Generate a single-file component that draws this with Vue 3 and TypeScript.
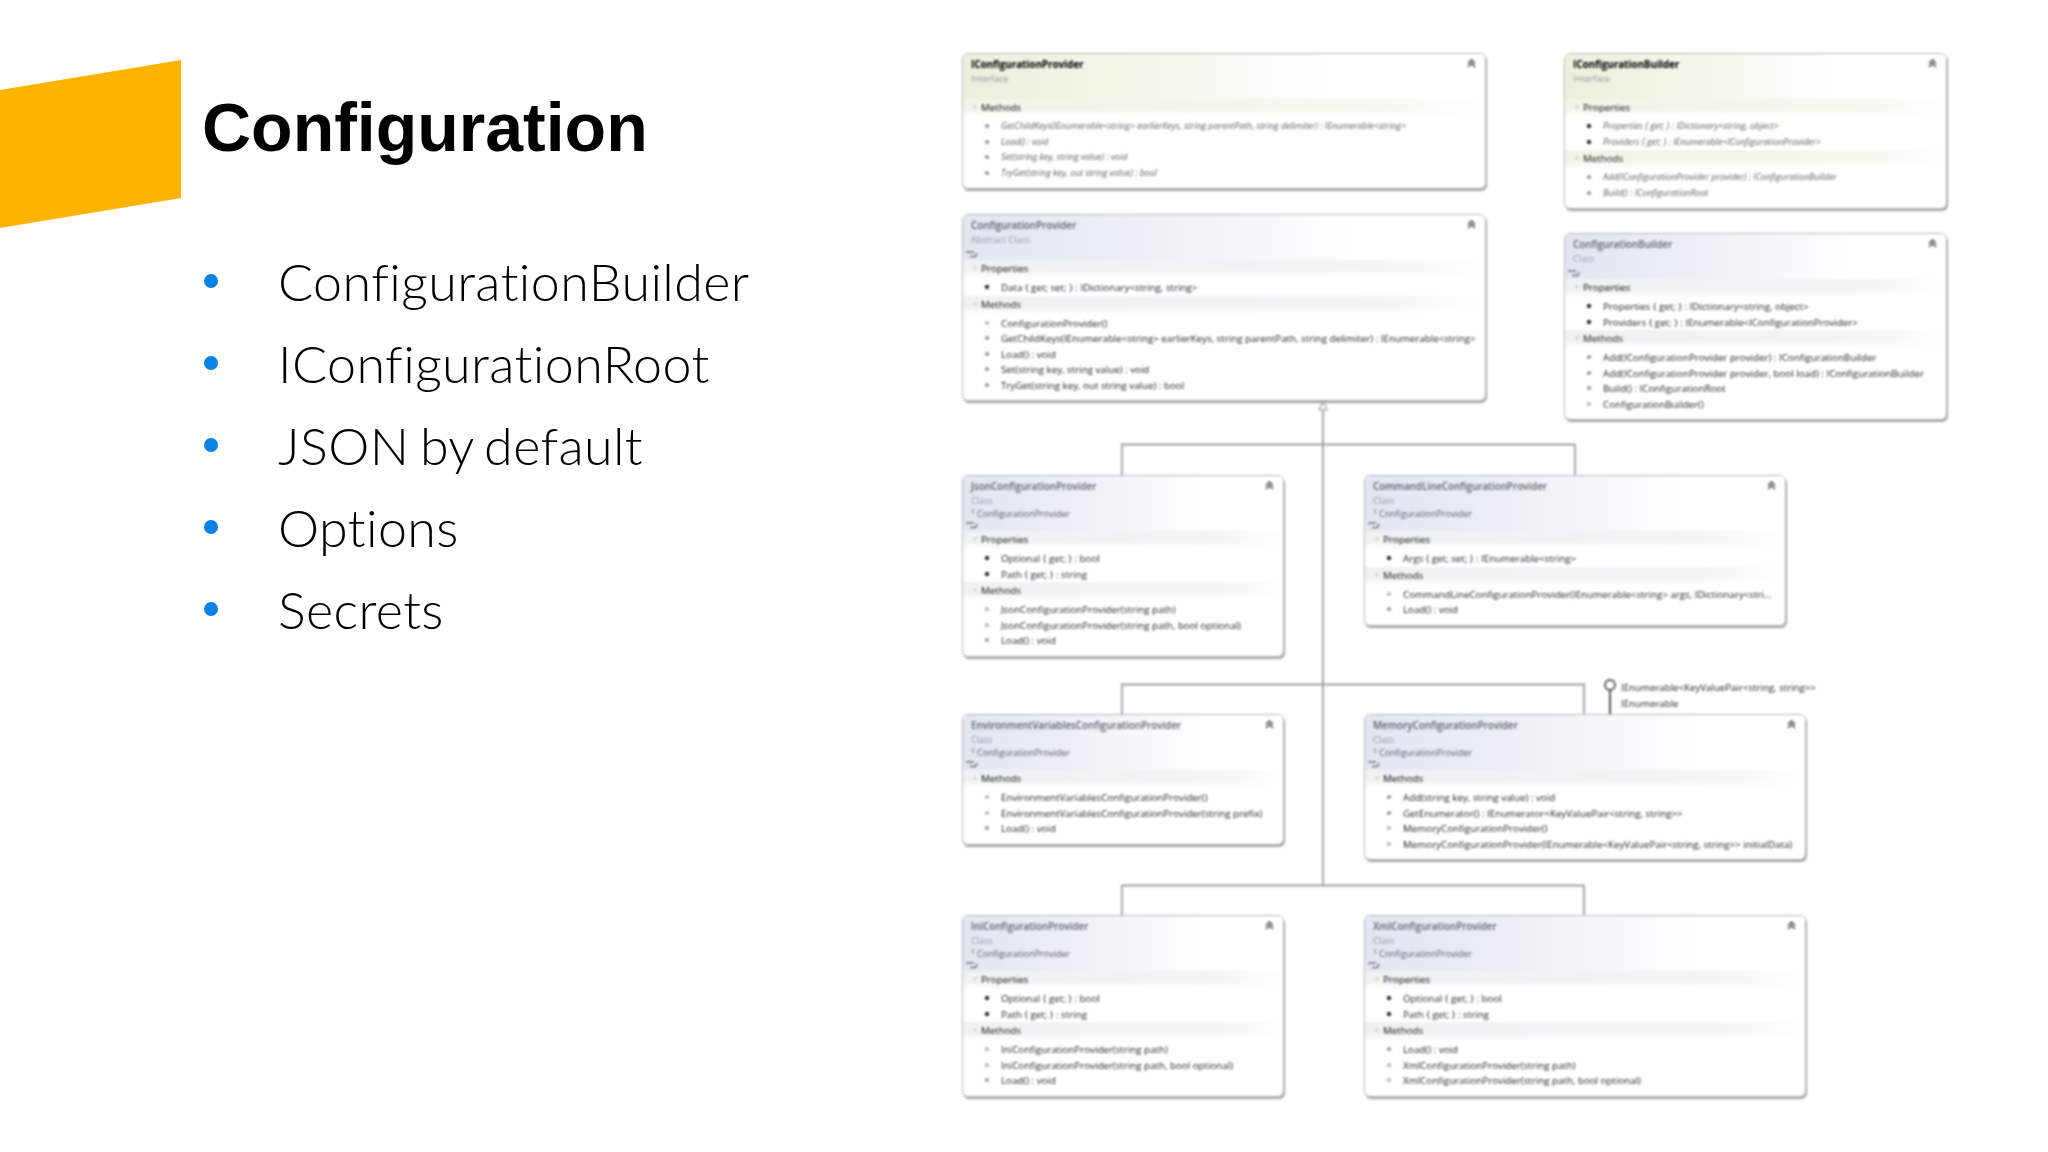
<script setup lang="ts">
type Member = { t: string; k: 'p' | 'm' | 'c' }
type Section = { name: string; items: Member[] }
type Card = {
  name: string
  kind: string
  base?: string
  iface?: boolean
  icon?: boolean
  x: number
  y: number
  w: number
  sections: Section[]
}

const bullets = ['ConfigurationBuilder', 'IConfigurationRoot', 'JSON by default', 'Options', 'Secrets']

const P = (t: string): Member => ({ t, k: 'p' })
const M = (t: string): Member => ({ t, k: 'm' })
const C = (t: string): Member => ({ t, k: 'c' })

const cards: Card[] = [
  {
    name: 'IConfigurationProvider', kind: 'Interface', iface: true, x: 2, y: 53, w: 524,
    sections: [{ name: 'Methods', items: [
      M('GetChildKeys(IEnumerable<string> earlierKeys, string parentPath, string delimiter) : IEnumerable<string>'),
      M('Load() : void'),
      M('Set(string key, string value) : void'),
      M('TryGet(string key, out string value) : bool')
    ] }]
  },
  {
    name: 'ConfigurationProvider', kind: 'Abstract Class', icon: true, x: 2, y: 214, w: 524,
    sections: [
      { name: 'Properties', items: [P('Data { get; set; } : IDictionary<string, string>')] },
      { name: 'Methods', items: [
        C('ConfigurationProvider()'),
        M('GetChildKeys(IEnumerable<string> earlierKeys, string parentPath, string delimiter) : IEnumerable<string>'),
        M('Load() : void'),
        M('Set(string key, string value) : void'),
        M('TryGet(string key, out string value) : bool')
      ] }
    ]
  },
  {
    name: 'IConfigurationBuilder', kind: 'Interface', iface: true, x: 604, y: 53, w: 383,
    sections: [
      { name: 'Properties', items: [
        P('Properties { get; } : IDictionary<string, object>'),
        P('Providers { get; } : IEnumerable<IConfigurationProvider>')
      ] },
      { name: 'Methods', items: [
        M('Add(IConfigurationProvider provider) : IConfigurationBuilder'),
        M('Build() : IConfigurationRoot')
      ] }
    ]
  },
  {
    name: 'ConfigurationBuilder', kind: 'Class', icon: true, x: 604, y: 233, w: 383,
    sections: [
      { name: 'Properties', items: [
        P('Properties { get; } : IDictionary<string, object>'),
        P('Providers { get; } : IEnumerable<IConfigurationProvider>')
      ] },
      { name: 'Methods', items: [
        M('Add(IConfigurationProvider provider) : IConfigurationBuilder'),
        M('Add(IConfigurationProvider provider, bool load) : IConfigurationBuilder'),
        M('Build() : IConfigurationRoot'),
        C('ConfigurationBuilder()')
      ] }
    ]
  },
  {
    name: 'JsonConfigurationProvider', kind: 'Class', base: 'ConfigurationProvider', icon: true, x: 2, y: 475, w: 322,
    sections: [
      { name: 'Properties', items: [P('Optional { get; } : bool'), P('Path { get; } : string')] },
      { name: 'Methods', items: [
        C('JsonConfigurationProvider(string path)'),
        C('JsonConfigurationProvider(string path, bool optional)'),
        M('Load() : void')
      ] }
    ]
  },
  {
    name: 'CommandLineConfigurationProvider', kind: 'Class', base: 'ConfigurationProvider', icon: true, x: 404, y: 475, w: 422,
    sections: [
      { name: 'Properties', items: [P('Args { get; set; } : IEnumerable<string>')] },
      { name: 'Methods', items: [
        C('CommandLineConfigurationProvider(IEnumerable<string> args, IDictionary<stri...'),
        M('Load() : void')
      ] }
    ]
  },
  {
    name: 'EnvironmentVariablesConfigurationProvider', kind: 'Class', base: 'ConfigurationProvider', icon: true, x: 2, y: 714, w: 322,
    sections: [{ name: 'Methods', items: [
      C('EnvironmentVariablesConfigurationProvider()'),
      C('EnvironmentVariablesConfigurationProvider(string prefix)'),
      M('Load() : void')
    ] }]
  },
  {
    name: 'MemoryConfigurationProvider', kind: 'Class', base: 'ConfigurationProvider', icon: true, x: 404, y: 714, w: 442,
    sections: [{ name: 'Methods', items: [
      M('Add(string key, string value) : void'),
      M('GetEnumerator() : IEnumerator<KeyValuePair<string, string>>'),
      C('MemoryConfigurationProvider()'),
      C('MemoryConfigurationProvider(IEnumerable<KeyValuePair<string, string>> initialData)')
    ] }]
  },
  {
    name: 'IniConfigurationProvider', kind: 'Class', base: 'ConfigurationProvider', icon: true, x: 2, y: 915, w: 322,
    sections: [
      { name: 'Properties', items: [P('Optional { get; } : bool'), P('Path { get; } : string')] },
      { name: 'Methods', items: [
        C('IniConfigurationProvider(string path)'),
        C('IniConfigurationProvider(string path, bool optional)'),
        M('Load() : void')
      ] }
    ]
  },
  {
    name: 'XmlConfigurationProvider', kind: 'Class', base: 'ConfigurationProvider', icon: true, x: 404, y: 915, w: 442,
    sections: [
      { name: 'Properties', items: [P('Optional { get; } : bool'), P('Path { get; } : string')] },
      { name: 'Methods', items: [
        M('Load() : void'),
        C('XmlConfigurationProvider(string path)'),
        C('XmlConfigurationProvider(string path, bool optional)')
      ] }
    ]
  }
]

const links: string[] = [
  'M363 402V885',
  'M162 475V444.5H615V475',
  'M162 714V684.5H624V714',
  'M162 915V885.5H624V915'
]
</script>

<template>
  <main class="slide">
    <section class="intro">
      <header class="head">
        <svg class="flag" width="181" height="168" viewBox="0 0 181 168" aria-hidden="true">
          <polygon points="0,30 181,0 181,138 0,168" fill="#ffb400" />
        </svg>
        <h1 class="title">Configuration</h1>
      </header>
      <ul class="points">
        <li v-for="b in bullets" :key="b" class="point">
          <span class="dot"></span>
          <span class="point-text">{{ b }}</span>
        </li>
      </ul>
    </section>

    <section class="diagram">
      <svg class="wires" width="1000" height="1152" viewBox="0 0 1000 1152" aria-hidden="true">
        <path v-for="l in links" :key="l" :d="l" fill="none" stroke="#a0a0a0" stroke-width="1.8" />
        <path d="M650 691V714" fill="none" stroke="#555" stroke-width="2" />
        <polygon points="363,401 359,410 367,410" fill="#fff" stroke="#999" stroke-width="1.2" />
        <circle cx="650" cy="685" r="5" fill="#fff" stroke="#555" stroke-width="1.8" />
      </svg>

      <div class="iface-label">
        <div>IEnumerable&lt;KeyValuePair&lt;string, string&gt;&gt;</div>
        <div>IEnumerable</div>
      </div>

      <article
        v-for="c in cards"
        :key="c.name"
        class="card"
        :style="{ left: c.x + 'px', top: c.y + 'px', width: c.w + 'px' }"
      >
        <div class="card-head" :class="{ green: c.iface, tall: c.base }">
          <div class="card-name" :class="{ strong: c.iface }">{{ c.name }}</div>
          <div class="card-kind">{{ c.kind }}</div>
          <div v-if="c.base" class="card-base"><i class="tick"></i>{{ c.base }}</div>
          <svg v-if="c.icon" class="lolly" width="14" height="8" viewBox="0 0 14 8" aria-hidden="true">
            <path d="M0 2H8M4 6.500H9.500L11 3" fill="none" stroke="#6f7580" stroke-width="1.500" />
          </svg>
          <svg class="fold" width="9" height="9" viewBox="0 0 9 9" aria-hidden="true">
            <path d="M1 4.500L4.500 1L8 4.500M1 8L4.500 4.500L8 8" fill="none" stroke="#555" stroke-width="1.600" />
          </svg>
        </div>
        <div v-for="s in c.sections" :key="s.name" class="group">
          <div class="group-head" :class="{ green: c.iface }">
            <i class="caret"></i>{{ s.name }}
          </div>
          <ul class="members">
            <li v-for="m in s.items" :key="m.t" class="member" :class="{ ghost: c.iface }">
              <i class="glyph" :class="m.k"></i>{{ m.t }}
            </li>
          </ul>
        </div>
      </article>
    </section>
  </main>
</template>

<style>
html, body { margin: 0; background: #fff; }
</style>

<style scoped>
.slide {
  display: flex;
  width: 2048px;
  height: 1152px;
  overflow: hidden;
  background: #fff;
}
.intro { width: 960px; flex: none; padding-top: 60px; box-sizing: border-box; }
.head { display: flex; align-items: flex-start; height: 168px; }
.flag { flex: none; }
.title {
  margin: 21px 0 0 21px;
  font: 700 68px/92px "Liberation Sans", Arial, sans-serif;
  color: #000;
}
.points { list-style: none; margin: 12px 0 0; padding: 0 0 0 204px; }
.point { display: flex; align-items: center; height: 82px; }
.dot { width: 14px; height: 14px; border-radius: 50%; background: #0a84e4; flex: none; }
.point-text {
  margin-left: 60px;
  font: 300 52px/82px Lato, "Open Sans", sans-serif;
  color: #000;
  letter-spacing: 0.4px;
  word-spacing: -4px;
  white-space: nowrap;
}

.diagram {
  position: relative;
  width: 1000px;
  height: 1152px;
  flex: none;
  filter: blur(0.8px);
  font-family: "Open Sans", "Noto Sans", sans-serif;
}
.wires { position: absolute; left: 0; top: 0; }
.iface-label {
  position: absolute;
  left: 661px;
  top: 680px;
  font-size: 9.700px;
  line-height: 16px;
  color: #222;
  white-space: nowrap;
}
.card {
  position: absolute;
  box-sizing: border-box;
  padding-bottom: 7px;
  background: #fff;
  border: 1px solid #b8b8b8;
  border-radius: 6px;
  box-shadow: 1px 2px 1px #a4a4a4;
  overflow: hidden;
}
.card-head {
  position: relative;
  height: 45px;
  box-sizing: border-box;
  padding: 4px 0 0 8px;
  background: linear-gradient(90deg, #e1e6f1 0%, #edf0f6 35%, #fff 75%);
}
.card-head.tall { height: 55px; }
.card-head.green { background: linear-gradient(90deg, #ebf0dc 0%, #f5f7ec 35%, #fff 70%); }
.card-name {
  font-size: 9.800px;
  line-height: 14px;
  font-weight: 600;
  color: #62676f;
  white-space: nowrap;
}
.card-name.strong { color: #000; font-weight: 700; }
.card-kind { font-size: 9px; line-height: 13px; color: #989da5; }
.card-base { font-size: 9px; line-height: 13px; color: #5c6169; white-space: nowrap; }
.tick {
  display: inline-block;
  width: 2px;
  height: 5px;
  margin: 0 3px 3px 1px;
  background: #aab;
}
.lolly { position: absolute; left: 3px; bottom: 2px; }
.fold { position: absolute; right: 9px; top: 5px; }
.group-head {
  position: relative;
  height: 18px;
  box-sizing: border-box;
  padding-left: 18px;
  font-size: 9.750px;
  line-height: 18px;
  color: #111;
  background:
    linear-gradient(180deg, rgba(255, 255, 255, 0) 55%, #fff 100%),
    linear-gradient(90deg, #f0f1f2 0%, #f5f5f6 80%, #fff 100%);
}
.group-head.green {
  background:
    linear-gradient(180deg, rgba(255, 255, 255, 0) 55%, #fff 100%),
    linear-gradient(90deg, #f2f4ea 0%, #f7f8f0 80%, #fff 100%);
}
.caret {
  position: absolute;
  left: 10px;
  top: 6px;
  width: 4px;
  height: 4px;
  background: #dcdcdc;
  border-radius: 1px;
}
.members { list-style: none; margin: 0; padding: 2px 0 0; }
.member {
  position: relative;
  height: 15.500px;
  padding-left: 38px;
  font-size: 9.750px;
  line-height: 15.500px;
  color: #1c1c1c;
  white-space: nowrap;
}
.member.ghost { color: #5c5c5c; font-style: italic; font-size: 8.800px; }
.glyph {
  position: absolute;
  left: 22px;
  top: 5px;
  width: 4px;
  height: 4px;
  border-radius: 1px;
}
.glyph.p { background: #333; }
.glyph.m { background: #a2a4a8; }
.glyph.c { background: #bdbfc3; }
</style>
